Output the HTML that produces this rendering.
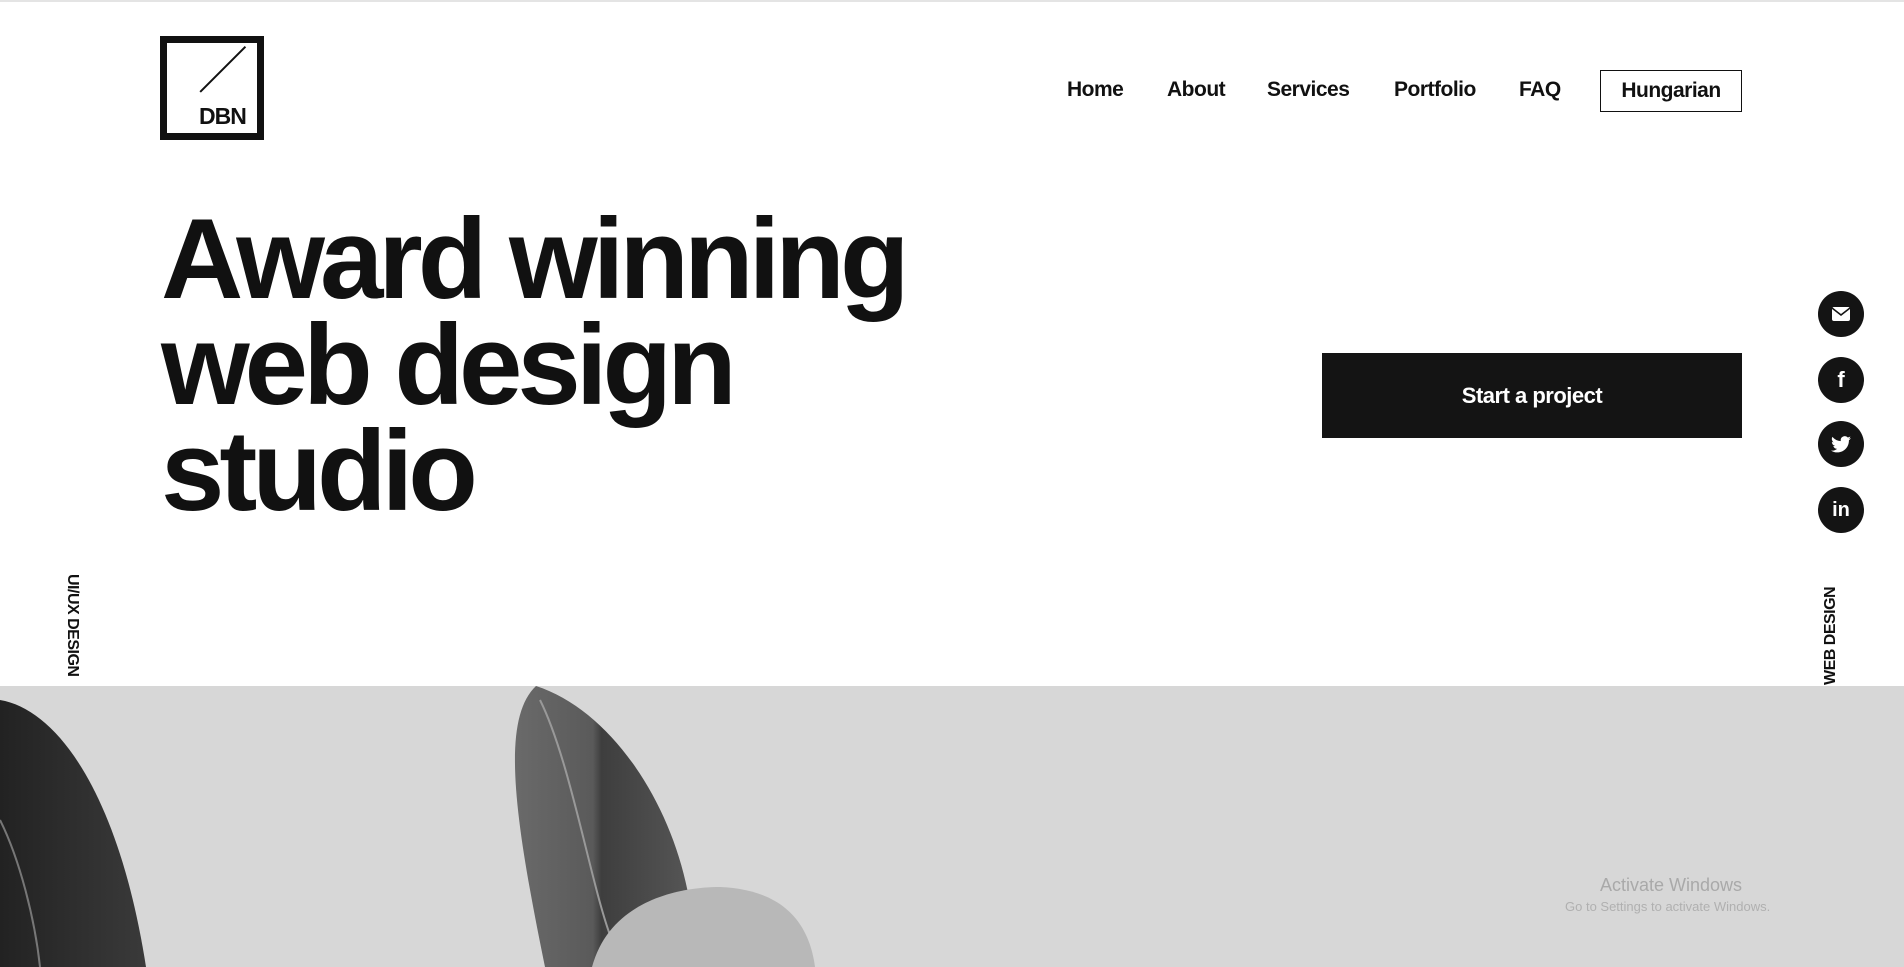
<!DOCTYPE html>
<html><head><meta charset="utf-8"><style>
*{margin:0;padding:0;box-sizing:border-box}
body{width:1904px;height:967px;overflow:hidden;background:#fff;font-family:"Liberation Sans",Arial,sans-serif;color:#111;position:relative}
.top{position:absolute;left:0;top:0;width:1904px;height:2px;background:#e4e4e4}
.logo{position:absolute;left:160px;top:36px;width:104px;height:104px;border:7px solid #111}
.logo .ln{position:absolute;left:33px;top:48px;width:64px;height:1.5px;background:#111;transform:rotate(-45deg);transform-origin:left center}
.logo b{position:absolute;left:32px;top:60px;font-size:23px;font-weight:700;letter-spacing:-1px}
.nav a{position:absolute;top:78px;font-size:21px;font-weight:700;color:#111;text-decoration:none;letter-spacing:-0.5px}
.hung{position:absolute;left:1600px;top:70px;width:142px;height:42px;border:1.5px solid #111;font-size:21px;font-weight:700;text-align:center;line-height:39px;letter-spacing:-0.5px}
h1{position:absolute;left:161px;top:207px;font-size:114px;line-height:106px;font-weight:700;letter-spacing:-5px}
.btn{position:absolute;left:1322px;top:353px;width:420px;height:85px;background:#141414;color:#fff;font-size:22px;font-weight:700;text-align:center;line-height:85px;letter-spacing:-0.5px}
.soc{position:absolute;left:1818px;width:46px;height:46px;border-radius:50%;background:#141414;display:flex;align-items:center;justify-content:center;color:#fff;font-weight:700}
.vt{position:absolute;font-size:16px;font-weight:700;white-space:nowrap;letter-spacing:-0.5px}
.img{position:absolute;left:0;top:686px;width:1904px;height:281px;background:#d7d7d7;overflow:hidden}
.aw{position:absolute;left:1600px;top:875px;color:#a9a9a9;font-size:18px}
.aw2{position:absolute;left:1565px;top:899px;color:#b0b0b0;font-size:13px}
</style></head><body>
<div class="top"></div>
<div class="logo"><div class="ln"></div><b>DBN</b></div>
<div class="nav">
<a style="left:1067px">Home</a><a style="left:1167px">About</a><a style="left:1267px">Services</a><a style="left:1394px">Portfolio</a><a style="left:1519px">FAQ</a>
</div>
<div class="hung">Hungarian</div>
<h1>Award winning<br>web design<br>studio</h1>
<div class="btn">Start a project</div>
<div class="soc" style="top:291px"><svg width="18" height="14" viewBox="0 0 18 14"><rect x="0" y="0" width="18" height="14" rx="2" fill="#fff"/><path d="M0 1 L9 8 L18 1" stroke="#141414" stroke-width="1.6" fill="none"/></svg></div>
<div class="soc" style="top:357px;font-size:22px;font-family:'Liberation Sans'">f</div>
<div class="soc" style="top:421px"><svg width="20" height="17" viewBox="0 0 24 20"><path fill="#fff" d="M24 2.4a10 10 0 0 1-2.8.8A5 5 0 0 0 23.3.4a10 10 0 0 1-3.1 1.2A4.9 4.9 0 0 0 11.8 6 14 14 0 0 1 1.7.9a4.9 4.9 0 0 0 1.5 6.6A4.9 4.9 0 0 1 1 6.9a4.9 4.9 0 0 0 3.9 4.8 5 5 0 0 1-2.2.1 4.9 4.9 0 0 0 4.6 3.4A9.9 9.9 0 0 1 0 17.3 14 14 0 0 0 7.5 19.5c9 0 14-7.5 14-14v-.6A10 10 0 0 0 24 2.4z"/></svg></div>
<div class="soc" style="top:487px;font-size:20px">in</div>
<div class="vt" style="left:81px;top:574px;transform-origin:0 0;transform:rotate(90deg)">UI/UX DESIGN</div>
<div class="vt" style="left:1822px;top:685px;transform-origin:0 0;transform:rotate(-90deg)">WEB DESIGN</div>
<div class="img">
<svg width="1904" height="281" viewBox="0 686 1904 281">
<defs><linearGradient id="g1" x1="0" x2="1"><stop offset="0" stop-color="#222"/><stop offset="1" stop-color="#3a3a3a"/></linearGradient>
<linearGradient id="g2" x1="0" x2="1"><stop offset="0" stop-color="#6a6a6a"/><stop offset="0.45" stop-color="#5a5a5a"/><stop offset="0.5" stop-color="#3e3e3e"/><stop offset="1" stop-color="#555"/></linearGradient></defs>
<path d="M0 700 C60 710 120 800 146 967 L0 967 Z" fill="url(#g1)"/>
<path d="M0 820 C20 860 35 920 40 967" stroke="#777" stroke-width="2" fill="none"/>
<path d="M536 686 C500 720 515 820 545 967 L600 967 C640 930 680 910 688 893 C670 800 610 710 536 686 Z" fill="url(#g2)"/>
<path d="M540 700 C570 760 590 880 610 935" stroke="#999" stroke-width="2" fill="none"/>
<path d="M592 967 C610 900 680 887 720 887 C790 890 810 930 815 967 Z" fill="#b8b8b8"/>
</svg>
<div class="aw" style="top:189px">Activate Windows</div>
<div class="aw2" style="top:213px">Go to Settings to activate Windows.</div>
</div>
</body></html>
